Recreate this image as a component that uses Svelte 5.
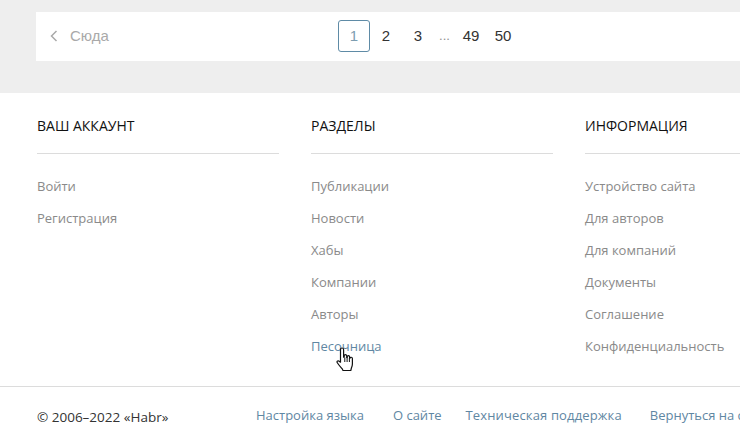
<script>
    const pages = ["2", "3"];
    const lastPages = ["49", "50"];
    const columns = [
        { title: "Ваш аккаунт", links: ["Войти", "Регистрация"] },
        { title: "Разделы", links: ["Публикации", "Новости", "Хабы", "Компании", "Авторы", "Песочница"] },
        { title: "Информация", links: ["Устройство сайта", "Для авторов", "Для компаний", "Документы", "Соглашение", "Конфиденциальность"] }
    ];
    const bottomLinks = ["Настройка языка", "О сайте", "Техническая поддержка", "Вернуться на старую версию"];
</script>

<div class="page">
    <section class="top">
        <nav class="pager">
            <span class="prev">
                <svg width="8" height="12" viewBox="0 0 8 12"><path d="M6.500 1 1.500 6l5 5" fill="none" stroke="#a9a9a9" stroke-width="1.500"/></svg>
                <span>Сюда</span>
            </span>
            <div class="numbers">
                <span class="num current">1</span>
                {#each pages as p}
                    <span class="num">{p}</span>
                {/each}
                <span class="dots">...</span>
                {#each lastPages as p}
                    <span class="num">{p}</span>
                {/each}
            </div>
        </nav>
    </section>

    <footer>
        <div class="columns">
            {#each columns as col}
                <div class="col">
                    <h3>{col.title}</h3>
                    <ul>
                        {#each col.links as link}
                            <li class:hover={link === "Песочница"}>{link}</li>
                        {/each}
                    </ul>
                </div>
            {/each}
        </div>
        <div class="bottom">
            <span class="copy">© 2006–2022 «Habr»</span>
            <div class="bottom-links">
                {#each bottomLinks as link}
                    <span>{link}</span>
                {/each}
            </div>
        </div>
    </footer>

    <svg class="cursor" width="18" height="25" viewBox="0 0 18 25">
        <path d="M6 1c1 0 1.600.7 1.600 1.700v7.500l.6-.1V8.800c0-1.700 2.300-1.700 2.500 0v1.700l.5.100V9.800c.2-1.600 2.300-1.500 2.400.1v1.200l.5.100c.1-1.300 2.200-1.300 2.300.3v5.500c0 1.600-.5 2.800-1 4l-.6 2.500H7l-.7-1.600C5 20.300 3 18.500 1.300 15.800c-.8-1.300.4-2.500 1.500-1.800l1.700 1.200V2.700C4.500 1.700 5.200 1 6 1z" fill="#fff" stroke="#111" stroke-width="1.200" stroke-linejoin="round"/>
        <path d="M8.800 10.500v4.500M11.100 10.500v4.500M13.400 11v4" stroke="#111" stroke-width="1" fill="none"/>
    </svg>
</div>

<style>
    :global(body) {
        margin: 0;
        background: #fff;
        overflow: hidden;
    }

    .page {
        position: relative;
        width: 740px;
        height: 444px;
        overflow: hidden;
        font-family: "Open Sans", "Noto Sans", sans-serif;
    }

    .top {
        background: #eeeeee;
        height: 93px;
        padding: 12px 0 0 36px;
        box-sizing: border-box;
    }

    .pager {
        display: flex;
        align-items: center;
        height: 49px;
        background: #fff;
        font-family: "Liberation Sans", Arial, sans-serif;
        font-size: 15px;
        line-height: 17px;
    }

    .prev {
        display: flex;
        align-items: center;
        gap: 12px;
        width: 288px;
        box-sizing: border-box;
        margin-left: 14px;
        color: #a9a9a9;
        position: relative;
        top: -1px;
    }

    .numbers {
        display: flex;
        align-items: center;
        position: relative;
        top: -1px;
    }

    .num {
        width: 32px;
        height: 32px;
        box-sizing: border-box;
        display: flex;
        align-items: center;
        justify-content: center;
        color: #333;
        border-radius: 3px;
    }

    .num.current {
        border: 1px solid #5f8ba6;
        color: #7d9db1;
    }

    .dots {
        width: 21px;
        text-align: center;
        color: #909090;
        font-size: 13px;
    }

    .columns {
        display: flex;
        gap: 32px;
        padding: 0 0 0 37px;
        height: 293px;
        box-sizing: border-box;
    }

    .col {
        flex: 0 0 242px;
    }

    h3 {
        margin: 0;
        height: 61px;
        box-sizing: border-box;
        padding-top: 23px;
        font-size: 14px;
        line-height: 20px;
        font-weight: 500;
        text-transform: uppercase;
        color: #111;
        border-bottom: 1px solid #dcdcdc;
    }

    ul {
        list-style: none;
        margin: 17px 0 0;
        padding: 0;
    }

    li {
        height: 32px;
        line-height: 30px;
        font-size: 13px;
        color: #8a8a8a;
    }

    li.hover {
        color: #5f87a3;
    }

    .bottom {
        display: flex;
        align-items: center;
        height: 58px;
        padding-left: 37px;
        border-top: 1px solid #dcdcdc;
        font-size: 13px;
    }

    .copy {
        color: #333;
        width: 219px;
        flex: none;
        font-size: 13.500px;
        padding-top: 1px;
    }

    .bottom-links {
        display: flex;
        gap: 28px;
        white-space: nowrap;
        color: #5f87a3;
        position: relative;
        top: -1px;
    }

    .bottom-links span:nth-child(2) {
        margin-left: 1px;
    }

    .bottom-links span:nth-child(3) {
        margin-left: -4px;
        letter-spacing: 0.14px;
    }

    .cursor {
        position: absolute;
        left: 336px;
        top: 347px;
    }
</style>
